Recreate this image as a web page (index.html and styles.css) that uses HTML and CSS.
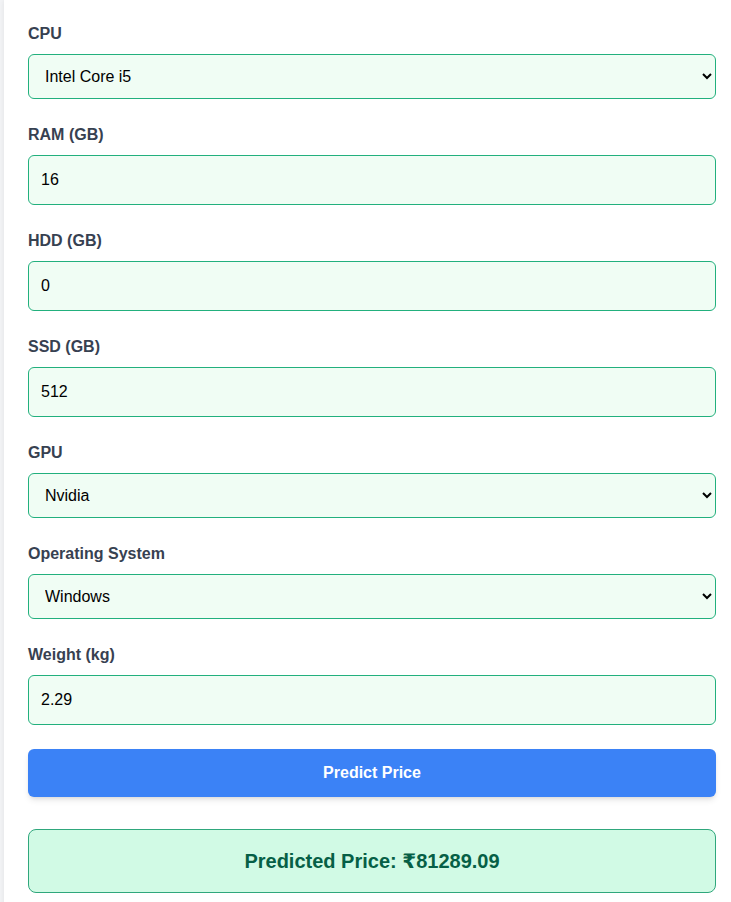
FILE: index.html
```html
<!DOCTYPE html>
<html lang="en">
<head>
<meta charset="utf-8">
<title>Laptop Price Predictor</title>
<link rel="stylesheet" href="styles.css">
</head>
<body>
<div class="page">
  <form class="card">
    <div class="field">
      <label class="label">CPU</label>
      <select class="control select">
        <option>Intel Core i5</option>
      </select>
    </div>
    <div class="field">
      <label class="label">RAM (GB)</label>
      <input class="control" type="text" value="16">
    </div>
    <div class="field">
      <label class="label">HDD (GB)</label>
      <input class="control" type="text" value="0">
    </div>
    <div class="field">
      <label class="label">SSD (GB)</label>
      <input class="control" type="text" value="512">
    </div>
    <div class="field">
      <label class="label">GPU</label>
      <select class="control select">
        <option>Nvidia</option>
      </select>
    </div>
    <div class="field">
      <label class="label">Operating System</label>
      <select class="control select">
        <option>Windows</option>
      </select>
    </div>
    <div class="field">
      <label class="label">Weight (kg)</label>
      <input class="control" type="text" value="2.29">
    </div>
    <button type="button" class="btn">Predict Price</button>
    <div class="result">Predicted Price: ₹81289.09</div>
  </form>
</div>
</body>
</html>
```
FILE: styles.css
```css
html, body {
  margin: 0;
  padding: 0;
}
body {
  background: #f3f4f6;
  font-family: "Liberation Sans", Arial, "DejaVu Sans", sans-serif;
  font-size: 16px;
  line-height: 24px;
  overflow: hidden;
}
.page {
  padding-left: 4px;
  height: 902px;
}
.card {
  background: #ffffff;
  box-shadow: 0 0 6px rgba(0, 0, 0, 0.08);
  padding: 22px 15px 24px 24px;
  display: flex;
  flex-direction: column;
  gap: 24px;
  min-height: 902px;
  box-sizing: border-box;
}
.field {
  display: flex;
  flex-direction: column;
}
.label {
  font-weight: 700;
  color: #374151;
  margin-bottom: 8px;
  line-height: 24px;
}
.control {
  box-sizing: border-box;
  width: 100%;
  margin: 0;
  padding: 12px;
  font-family: "Liberation Sans", Arial, sans-serif;
  font-size: 16px;
  line-height: 24px;
  color: #000000;
  background: #f0fdf4;
  border: 1px solid #22b07d;
  border-radius: 6px;
  outline: none;
}
.select {
  padding: 12px 8px 12px 12px;
}
.btn {
  margin: 0;
  padding: 12px;
  border: none;
  border-radius: 6px;
  background: #3b82f6;
  color: #ffffff;
  font-family: "Liberation Sans", Arial, sans-serif;
  font-size: 16px;
  line-height: 24px;
  font-weight: 700;
  box-shadow: 0 4px 6px -1px rgba(0, 0, 0, 0.1), 0 2px 4px -2px rgba(0, 0, 0, 0.1);
  cursor: pointer;
}
.result {
  margin-top: 8px;
  padding: 16px;
  background: #d1fae5;
  border: 1px solid #2fa77c;
  border-radius: 8px;
  text-align: center;
  color: #065f46;
  font-size: 20px;
  line-height: 30px;
  font-weight: 700;
}
```
